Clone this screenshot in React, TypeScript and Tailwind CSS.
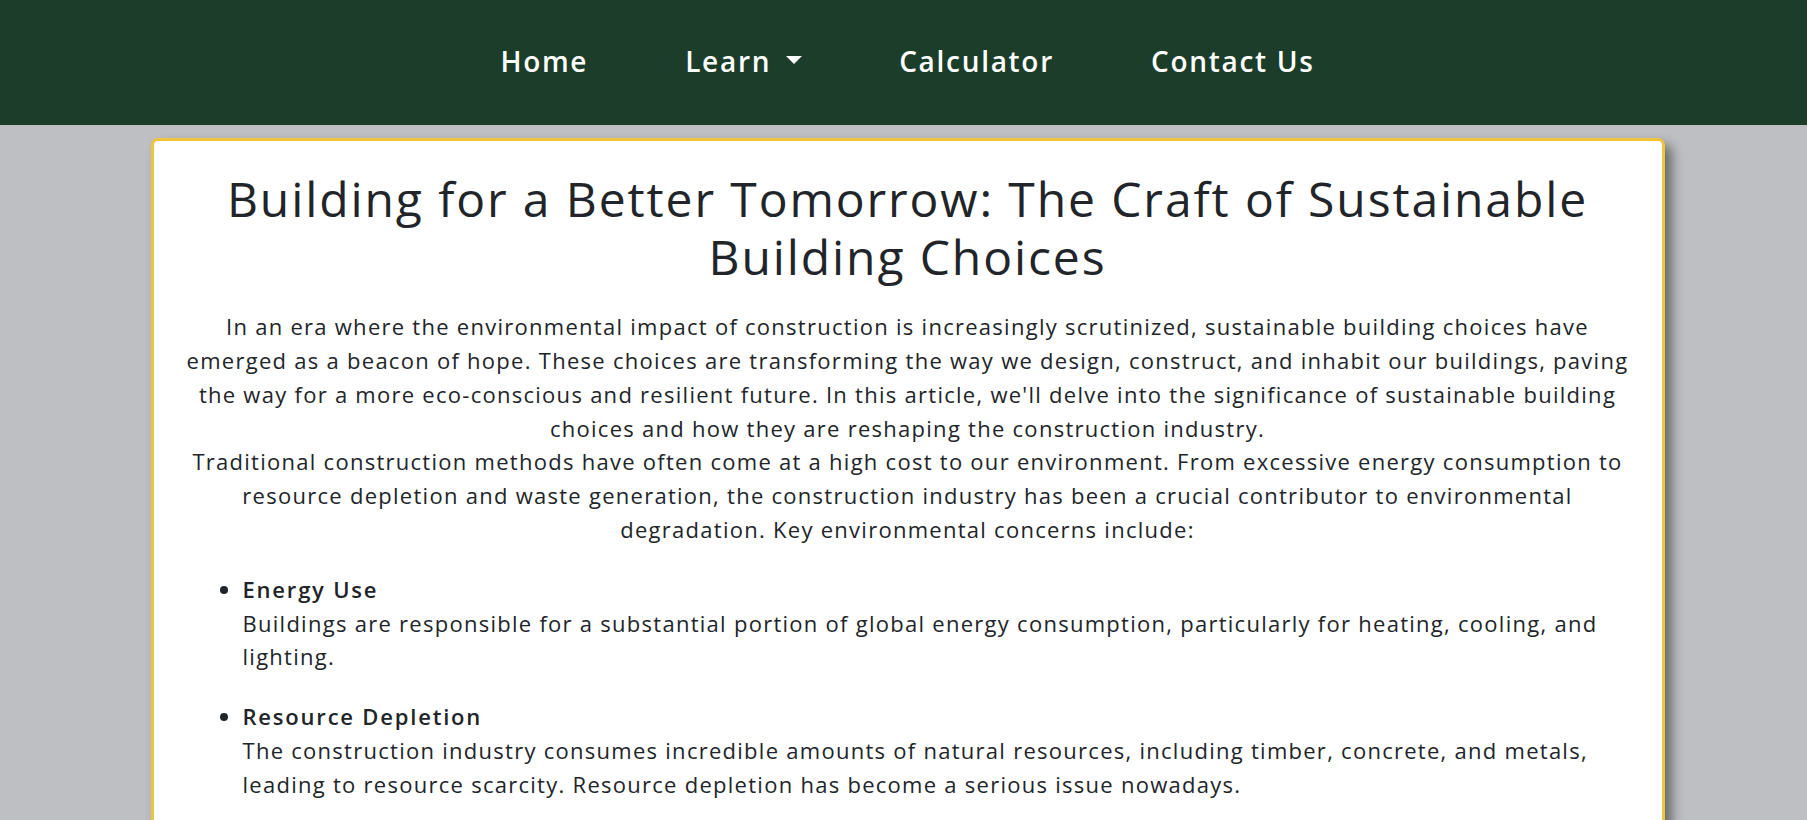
import React from "react";

const navItems = ["Home", "Learn", "Calculator", "Contact Us"];

const concerns = [
  {
    title: "Energy Use",
    lines: [
      "Buildings are responsible for a substantial portion of global energy consumption, particularly for heating, cooling, and",
      "lighting.",
    ],
  },
  {
    title: "Resource Depletion",
    lines: [
      "The construction industry consumes incredible amounts of natural resources, including timber, concrete, and metals,",
      "leading to resource scarcity. Resource depletion has become a serious issue nowadays.",
    ],
  },
  {
    title: "Waste Generation",
    lines: [
      "Construction and demolition activities generate massive amounts of waste, much of which ends up in landfills.",
    ],
  },
];

const App = () => {
  return (
    <div className="min-h-screen bg-[#bebfc3] text-[#212529] font-['Open_Sans',sans-serif]">
      {/* Navbar */}
      <nav className="h-[125px] bg-[#1b3d29] flex items-center justify-center pl-[8px]">
        <ul className="flex items-center gap-[97px] pb-[3px]">
          {navItems.map((item) => (
            <li key={item} className="flex items-center text-white text-[28px] font-semibold tracking-[1.7px]">
              {item}
              {item === "Learn" && (
                <span className="ml-[15px] -mt-[3px] w-0 h-0 border-t-[8px] border-t-white border-x-[8px] border-x-transparent"></span>
              )}
            </li>
          ))}
        </ul>
      </nav>

      {/* Article card */}
      <div className="pl-[8px] pt-[13px]">
        <article className="mx-auto w-[1514px] bg-white border-[3px] border-[#f0c43c] rounded-[7px] shadow-[7px_7px_12px_rgba(0,0,0,0.45)] px-[24px] pt-[29px] pb-[40px]">
          <h1 className="text-center text-[48px] leading-[57.6px] font-normal tracking-[1.9px]">
            Building for a Better Tomorrow: The Craft of Sustainable
            <br />
            Building Choices
          </h1>
          <div className="mt-[25px] text-center text-[22px] leading-[33.8px] tracking-[1.27px]">
            <p>
              In an era where the environmental impact of construction is increasingly scrutinized, sustainable building choices have
              <br />
              emerged as a beacon of hope. These choices are transforming the way we design, construct, and inhabit our buildings, paving
              <br />
              the way for a more eco-conscious and resilient future. In this article, we'll delve into the significance of sustainable building
              <br />
              choices and how they are reshaping the construction industry.
            </p>
            <p>
              Traditional construction methods have often come at a high cost to our environment. From excessive energy consumption to
              <br />
              resource depletion and waste generation, the construction industry has been a crucial contributor to environmental
              <br />
              degradation. Key environmental concerns include:
            </p>
          </div>
          <ul className="mt-[26px] pl-[65px] list-disc text-[22px] leading-[33.8px] tracking-[1.27px] space-y-[26px]">
            {concerns.map((c) => (
              <li key={c.title}>
                <h3 className="font-semibold tracking-[1.8px]">{c.title}</h3>
                <p>
                  {c.lines.map((line, i) => (
                    <React.Fragment key={i}>
                      {i > 0 && <br />}
                      {line}
                    </React.Fragment>
                  ))}
                </p>
              </li>
            ))}
          </ul>
        </article>
      </div>
    </div>
  );
};

export default App;
